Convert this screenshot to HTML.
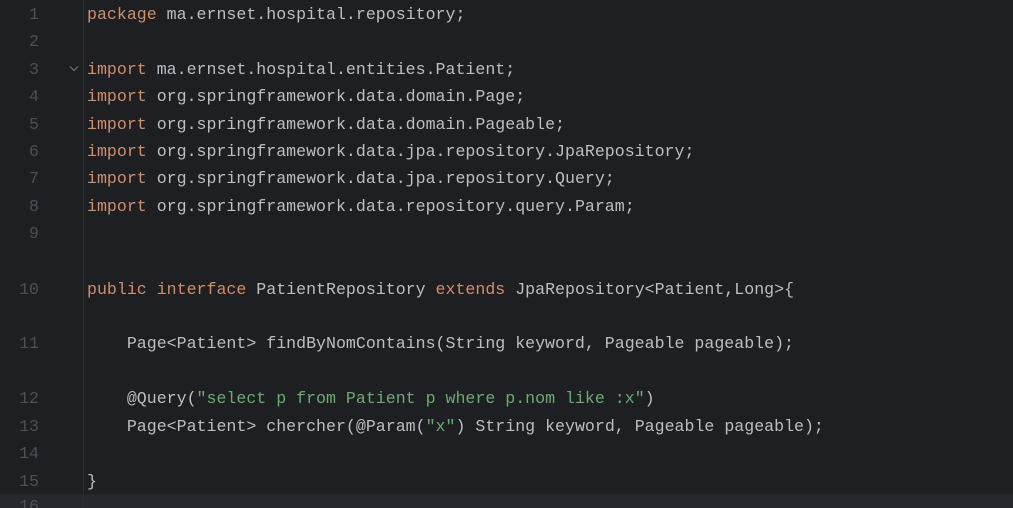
<!DOCTYPE html>
<html><head><style>
html,body{margin:0;width:1013px;height:508px;overflow:hidden}
body{background:#1e1f22;position:relative;font-family:"Liberation Mono",monospace;font-size:16.6px}
.cur{position:absolute;left:0;top:494px;width:1013px;height:14px;background:#26282e}
.gut{position:absolute;left:83px;top:0;width:1px;height:508px;background:#2b2d30}
.n{position:absolute;left:0;width:39px;text-align:right;color:#4b5059;height:20px;line-height:20px}
.l{position:absolute;left:87px;color:#bcbec4;white-space:pre;height:20px;line-height:20px}
.k{color:#cf8e6d}.s{color:#6aab73}
</style></head><body>
<div class="cur"></div><div class="gut"></div>
<svg style="position:absolute;left:69px;top:65px" width="10" height="7"><path d="M1 1.5 L5 5.5 L9 1.5" stroke="#6f737a" stroke-width="1.2" fill="none"/></svg>
<div class="n" style="top:5px">1</div><div class="l" style="top:5px"><span class="k">package</span> ma.ernset.hospital.repository;</div>
<div class="n" style="top:32px">2</div>
<div class="n" style="top:60px">3</div><div class="l" style="top:60px"><span class="k">import</span> ma.ernset.hospital.entities.Patient;</div>
<div class="n" style="top:87px">4</div><div class="l" style="top:87px"><span class="k">import</span> org.springframework.data.domain.Page;</div>
<div class="n" style="top:115px">5</div><div class="l" style="top:115px"><span class="k">import</span> org.springframework.data.domain.Pageable;</div>
<div class="n" style="top:142px">6</div><div class="l" style="top:142px"><span class="k">import</span> org.springframework.data.jpa.repository.JpaRepository;</div>
<div class="n" style="top:169px">7</div><div class="l" style="top:169px"><span class="k">import</span> org.springframework.data.jpa.repository.Query;</div>
<div class="n" style="top:197px">8</div><div class="l" style="top:197px"><span class="k">import</span> org.springframework.data.repository.query.Param;</div>
<div class="n" style="top:224px">9</div>
<div class="n" style="top:280px">10</div><div class="l" style="top:280px"><span class="k">public interface</span> PatientRepository <span class="k">extends</span> JpaRepository&lt;Patient,Long&gt;{</div>
<div class="n" style="top:334px">11</div><div class="l" style="top:334px">    Page&lt;Patient&gt; findByNomContains(String keyword, Pageable pageable);</div>
<div class="n" style="top:389px">12</div><div class="l" style="top:389px">    @Query(<span class="s">"select p from Patient p where p.nom like :x"</span>)</div>
<div class="n" style="top:417px">13</div><div class="l" style="top:417px">    Page&lt;Patient&gt; chercher(@Param(<span class="s">"x"</span>) String keyword, Pageable pageable);</div>
<div class="n" style="top:444px">14</div>
<div class="n" style="top:472px">15</div><div class="l" style="top:472px">}</div>
<div class="n" style="top:497px">16</div>
</body></html>
